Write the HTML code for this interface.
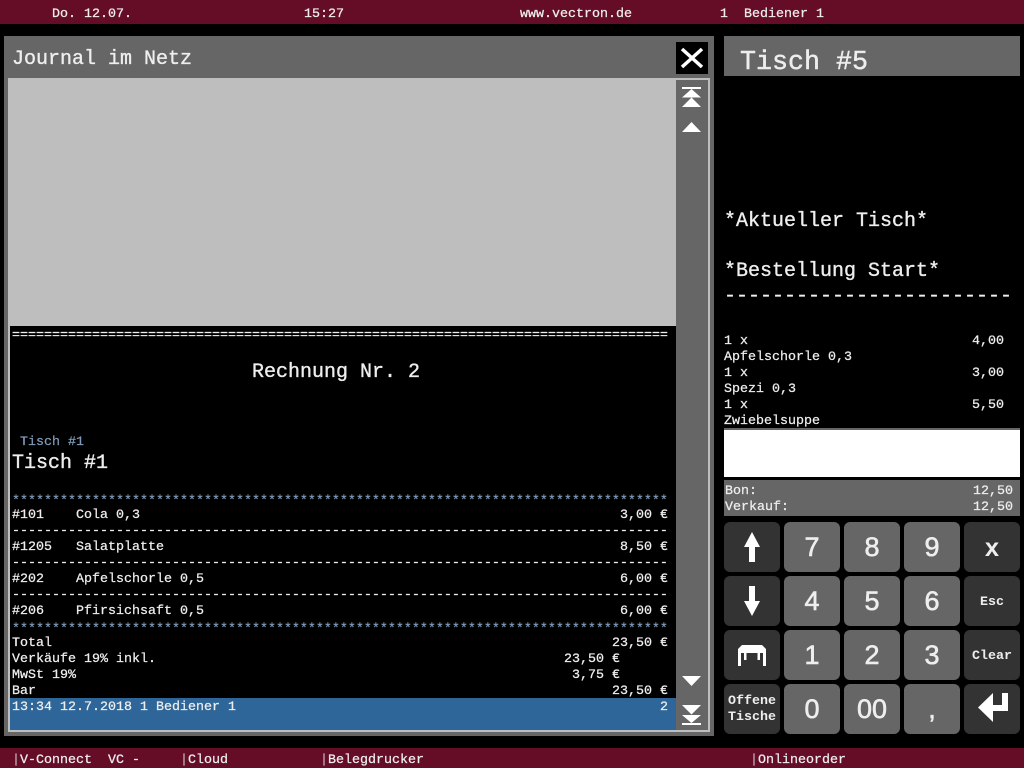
<!DOCTYPE html>
<html><head><meta charset="utf-8"><style>
html,body{margin:0;padding:0;background:#000;width:1024px;height:768px;overflow:hidden}
#r{position:relative;width:1024px;height:768px;overflow:hidden;background:#000}
.b{position:absolute}
.t{position:absolute;margin-top:2px;font-family:"Liberation Mono","DejaVu Sans Mono",monospace;font-size:13.33px;line-height:16px;height:16px;color:#eee;white-space:pre;-webkit-text-stroke:.25px}
.l{font-size:20px;line-height:24px;height:24px;color:#eee;-webkit-text-stroke:.35px}
.s{color:#7f9ab8}
.k{position:absolute;width:56px;height:50px;border-radius:6px;background:#666;color:#eee;text-align:center;font-family:"Liberation Sans",sans-serif;font-size:27px;line-height:50px;-webkit-text-stroke:.6px}
.d{background:#333}
.m{font-family:"Liberation Mono",monospace;font-weight:bold;font-size:13.33px;line-height:16px;-webkit-text-stroke:0}
svg{position:absolute;display:block}
</style></head><body><div id="r">
<div class="b" style="left:0;top:0;width:1024px;height:24px;background:#650d26"></div>
<div class="t" style="left:52px;top:5px">Do. 12.07.</div>
<div class="t" style="left:304px;top:5px">15:27</div>
<div class="t" style="left:520px;top:5px">www.vectron.de</div>
<div class="t" style="left:720px;top:5px">1  Bediener 1</div>

<div class="b" style="left:4px;top:36px;width:710px;height:700px;background:#666"></div>
<div class="t l" style="left:12px;top:46px">Journal im Netz</div>
<div class="b" style="left:676px;top:42px;width:32px;height:32px;background:#000"></div>
<svg style="left:676px;top:42px" width="32" height="32"><path d="M6 7L26 25M26 7L6 25" stroke="#fff" stroke-width="3.5"/></svg>
<div class="b" style="left:8px;top:78px;width:702px;height:654px;background:#bebebe"></div>
<div class="b" style="left:10px;top:326px;width:666px;height:372px;background:#000"></div>
<div class="b" style="left:10px;top:698px;width:666px;height:32px;background:#2f6699"></div>
<div class="b" style="left:676px;top:80px;width:32px;height:650px;background:#666"></div>
<svg style="left:676px;top:80px" width="32" height="60"><path d="M6 7h19v2H6zM15.500 9L25 17.500H6zM15.500 17.500L25 27H6zM15.500 42L25 52H6z" fill="#fff"/></svg>
<svg style="left:676px;top:670px" width="32" height="60"><path d="M6 6H25L15.500 16zM6 35H25L15.500 44.500zM6 45H25L15.500 53zM6 53h19v2H6z" fill="#fff"/></svg>

<div class="t" style="left:12px;top:326px">==================================================================================</div>
<div class="t l" style="left:252px;top:359px">Rechnung Nr. 2</div>
<div class="t s" style="left:20px;top:433px">Tisch #1</div>
<div class="t l" style="left:12px;top:450px">Tisch #1</div>
<div class="t s" style="left:12px;top:492px">**********************************************************************************</div>
<div class="t" style="left:12px;top:506px">#101    Cola 0,3</div><div class="t" style="left:620px;top:506px">3,00 €</div>
<div class="t" style="left:12px;top:522px">----------------------------------------------------------------------------------</div>
<div class="t" style="left:12px;top:538px">#1205   Salatplatte</div><div class="t" style="left:620px;top:538px">8,50 €</div>
<div class="t" style="left:12px;top:554px">----------------------------------------------------------------------------------</div>
<div class="t" style="left:12px;top:570px">#202    Apfelschorle 0,5</div><div class="t" style="left:620px;top:570px">6,00 €</div>
<div class="t" style="left:12px;top:586px">----------------------------------------------------------------------------------</div>
<div class="t" style="left:12px;top:602px">#206    Pfirsichsaft 0,5</div><div class="t" style="left:620px;top:602px">6,00 €</div>
<div class="t s" style="left:12px;top:620px">**********************************************************************************</div>
<div class="t" style="left:12px;top:634px">Total</div><div class="t" style="left:612px;top:634px">23,50 €</div>
<div class="t" style="left:12px;top:650px">Verkäufe 19% inkl.</div><div class="t" style="left:564px;top:650px">23,50 €</div>
<div class="t" style="left:12px;top:666px">MwSt 19%</div><div class="t" style="left:572px;top:666px">3,75 €</div>
<div class="t" style="left:12px;top:682px">Bar</div><div class="t" style="left:612px;top:682px">23,50 €</div>
<div class="t" style="left:12px;top:698px">13:34 12.7.2018 1 Bediener 1</div><div class="t" style="left:660px;top:698px">2</div>

<div class="b" style="left:724px;top:36px;width:296px;height:40px;background:#666"></div>
<div class="t" style="left:740px;top:45px;font-size:26.67px;line-height:32px;height:32px;-webkit-text-stroke:.45px">Tisch #5</div>
<div class="t l" style="left:724px;top:208px">*Aktueller Tisch*</div>
<div class="t l" style="left:724px;top:258px">*Bestellung Start*</div>
<div class="t l" style="left:724px;top:283px">------------------------</div>
<div class="t" style="left:724px;top:332px">1 x</div><div class="t" style="left:972px;top:332px">4,00</div>
<div class="t" style="left:724px;top:348px">Apfelschorle 0,3</div>
<div class="t" style="left:724px;top:364px">1 x</div><div class="t" style="left:972px;top:364px">3,00</div>
<div class="t" style="left:724px;top:380px">Spezi 0,3</div>
<div class="t" style="left:724px;top:396px">1 x</div><div class="t" style="left:972px;top:396px">5,50</div>
<div class="t" style="left:724px;top:412px;height:14px;overflow:hidden">Zwiebelsuppe</div>
<div class="b" style="left:724px;top:428px;width:296px;height:2px;background:#666"></div>
<div class="b" style="left:724px;top:430px;width:296px;height:47px;background:#fff"></div>
<div class="b" style="left:724px;top:480px;width:296px;height:36px;background:#666"></div>
<div class="t" style="left:725px;top:482px">Bon:</div><div class="t" style="left:973px;top:482px">12,50</div>
<div class="t" style="left:725px;top:498px">Verkauf:</div><div class="t" style="left:973px;top:498px">12,50</div>

<div class="k d" style="left:724px;top:522px"><svg style="left:20px;top:10px" width="16" height="30"><path d="M8 0L16 15H11V30H5V15H0z" fill="#fff"/></svg></div>
<div class="k" style="left:784px;top:522px">7</div><div class="k" style="left:844px;top:522px">8</div><div class="k" style="left:904px;top:522px">9</div>
<div class="k d" style="left:964px;top:522px;font-family:'Liberation Mono',monospace;font-weight:bold;font-size:25px;line-height:55px;-webkit-text-stroke:0">x</div>
<div class="k d" style="left:724px;top:576px"><svg style="left:20px;top:10px" width="16" height="30"><path d="M8 30L16 15H11V0H5V15H0z" fill="#fff"/></svg></div>
<div class="k" style="left:784px;top:576px">4</div><div class="k" style="left:844px;top:576px">5</div><div class="k" style="left:904px;top:576px">6</div>
<div class="k d m" style="left:964px;top:576px;line-height:53px">Esc</div>
<div class="k d" style="left:724px;top:630px"><svg style="left:14px;top:15px" width="28" height="21"><path d="M4 0H24L28 4V8H0V4zM0 8h3v13H0zM6 8h2.500v7H6zM19.500 8h2.500v7H19.500zM25 8h3v13H25z" fill="#fff"/></svg></div>
<div class="k" style="left:784px;top:630px">1</div><div class="k" style="left:844px;top:630px">2</div><div class="k" style="left:904px;top:630px">3</div>
<div class="k d m" style="left:964px;top:630px;line-height:53px">Clear</div>
<div class="k d m" style="left:724px;top:684px;padding-top:10px;height:40px">Offene<br>Tische</div>
<div class="k" style="left:784px;top:684px">0</div><div class="k" style="left:844px;top:684px">00</div><div class="k" style="left:904px;top:684px">,</div>
<div class="k d" style="left:964px;top:684px"><svg style="left:14px;top:9px" width="30" height="30"><path d="M15 0L0 14.500L15 29V18H30V0H24V12H15z" fill="#fff"/></svg></div>

<div class="b" style="left:0;top:748px;width:1024px;height:20px;background:#650d26"></div>
<div class="t" style="left:12px;top:751px"><span style="color:#b9a0a8">|</span>V-Connect  VC -</div>
<div class="t" style="left:180px;top:751px"><span style="color:#b9a0a8">|</span>Cloud</div>
<div class="t" style="left:320px;top:751px"><span style="color:#b9a0a8">|</span>Belegdrucker</div>
<div class="t" style="left:750px;top:751px"><span style="color:#b9a0a8">|</span>Onlineorder</div>
</div></body></html>
